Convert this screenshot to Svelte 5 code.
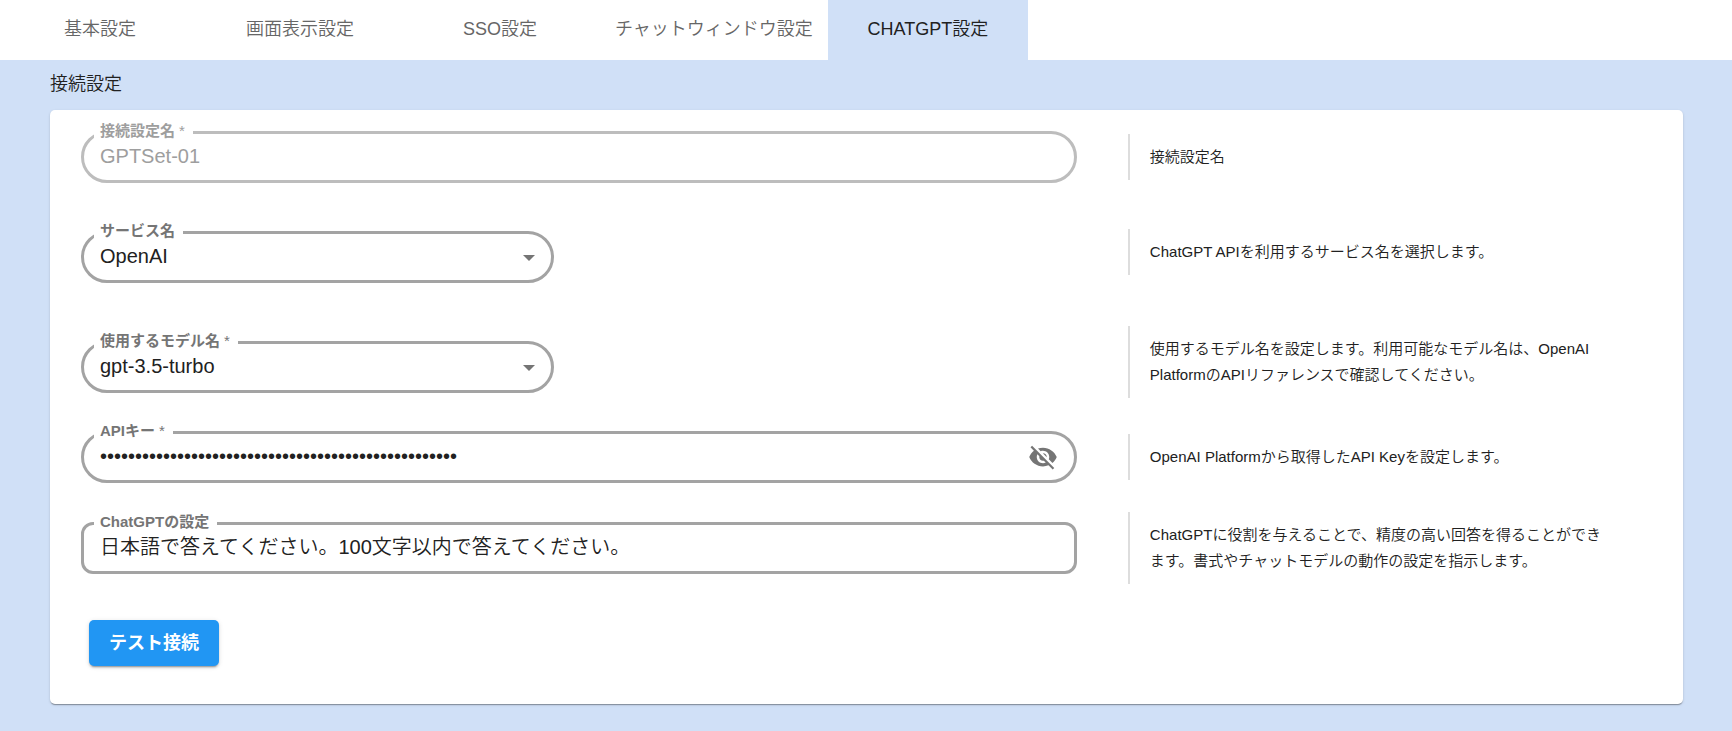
<script>
  let tabs = [
    { id: 'basic', label: '基本設定' },
    { id: 'display', label: '画面表示設定' },
    { id: 'sso', label: 'SSO設定' },
    { id: 'window', label: 'チャットウィンドウ設定' },
    { id: 'chatgpt', label: 'CHATGPT設定' }
  ];
  let activeTab = 'chatgpt';

  let settings = {
    name: 'GPTSet-01',
    service: 'OpenAI',
    model: 'gpt-3.5-turbo',
    apiKey: 'x'.repeat(51),
    prompt: '日本語で答えてください。100文字以内で答えてください。'
  };

  let services = ['OpenAI', 'Azure OpenAI'];
  let models = ['gpt-3.5-turbo', 'gpt-4'];

  let showKey = false;
  let testing = false;

  async function testConnection() {
    testing = true;
    try {
      await fetch('/api/chatgpt/test', {
        method: 'POST',
        headers: { 'Content-Type': 'application/json' },
        body: JSON.stringify(settings)
      });
    } catch (err) {
      console.error(err);
    } finally {
      testing = false;
    }
  }
</script>

<div class="tabs" role="tablist">
  {#each tabs as tab}
    <button
      type="button"
      role="tab"
      class="tab"
      class:active={tab.id === activeTab}
      aria-selected={tab.id === activeTab}
      on:click={() => (activeTab = tab.id)}
    >
      {tab.label}
    </button>
  {/each}
</div>

<main>
  <h2>接続設定</h2>

  <form class="card" on:submit|preventDefault={testConnection}>
    <div class="row">
      <div class="field disabled">
        <label for="name">接続設定名<span class="required">*</span></label>
        <input id="name" type="text" bind:value={settings.name} disabled />
      </div>
      <p class="description">接続設定名</p>
    </div>

    <div class="row service">
      <div class="field short">
        <label for="service">サービス名</label>
        <select id="service" bind:value={settings.service}>
          {#each services as service}
            <option value={service}>{service}</option>
          {/each}
        </select>
        <svg class="arrow" viewBox="0 0 12 6" aria-hidden="true"><path d="M0 0l6 6 6-6z" /></svg>
      </div>
      <p class="description">ChatGPT APIを利用するサービス名を選択します。</p>
    </div>

    <div class="row model">
      <div class="field short">
        <label for="model">使用するモデル名<span class="required">*</span></label>
        <select id="model" bind:value={settings.model}>
          {#each models as model}
            <option value={model}>{model}</option>
          {/each}
        </select>
        <svg class="arrow" viewBox="0 0 12 6" aria-hidden="true"><path d="M0 0l6 6 6-6z" /></svg>
      </div>
      <p class="description">
        使用するモデル名を設定します。利用可能なモデル名は、OpenAI PlatformのAPIリファレンスで確認してください。
      </p>
    </div>

    <div class="row key">
      <div class="field">
        <label for="api-key">APIキー<span class="required">*</span></label>
        <input
          id="api-key"
          type={showKey ? 'text' : 'password'}
          value={settings.apiKey}
          on:input={(e) => (settings.apiKey = e.currentTarget.value)}
        />
        <button type="button" class="toggle" aria-label="APIキーの表示切替" on:click={() => (showKey = !showKey)}>
          <svg viewBox="0 0 24 24" aria-hidden="true">
            <path d="M12 7c2.76 0 5 2.24 5 5 0 .65-.13 1.26-.36 1.83l2.92 2.92c1.51-1.26 2.7-2.89 3.43-4.75-1.73-4.39-6-7.5-11-7.5-1.4 0-2.74.25-3.98.7l2.16 2.16C10.74 7.13 11.35 7 12 7zM2 4.27l2.28 2.28.46.46C3.08 8.3 1.78 10.02 1 12c1.73 4.39 6 7.5 11 7.5 1.55 0 3.03-.3 4.38-.84l.42.42L19.73 22 21 20.73 3.27 3 2 4.27zM7.53 9.8l1.55 1.55c-.05.21-.08.43-.08.65 0 1.66 1.34 3 3 3 .22 0 .44-.03.65-.08l1.55 1.55c-.67.33-1.41.53-2.2.53-2.76 0-5-2.24-5-5 0-.79.2-1.53.53-2.2zm4.31-.78l3.15 3.15.02-.16c0-1.66-1.34-3-3-3l-.17.01z" />
          </svg>
        </button>
      </div>
      <p class="description">OpenAI Platformから取得したAPI Keyを設定します。</p>
    </div>

    <div class="row">
      <div class="field multiline">
        <label for="prompt">ChatGPTの設定</label>
        <textarea id="prompt" rows="1" bind:value={settings.prompt}></textarea>
      </div>
      <p class="description">
        ChatGPTに役割を与えることで、精度の高い回答を得ることができます。書式やチャットモデルの動作の設定を指示します。
      </p>
    </div>

    <button type="submit" class="submit" disabled={testing}>テスト接続</button>
  </form>
</main>

<style>
  :global(body) {
    background: #d0e0f7;
    color: #212121;
    font-family: 'Liberation Sans', 'Noto Sans CJK JP', sans-serif;
  }

  button, input, select, textarea {
    font-family: inherit;
  }

  .tabs {
    display: flex;
    background: #fff;
  }

  .tab {
    min-width: 200px;
    height: 60px;
    padding: 0 15px 6px;
    border: none;
    background: none;
    color: #666;
    font-size: 18px;
    font-weight: 350;
    cursor: pointer;
  }

  .tab.active {
    background: #d0e0f7;
    color: #212121;
  }

  main {
    padding: 11px 49px 27px 50px;
  }

  h2 {
    margin: 0 0 13px;
    font-size: 18px;
    font-weight: 350;
    line-height: 26px;
  }

  .card {
    display: flex;
    flex-direction: column;
    gap: 29px;
    padding: 21px 31px 38px;
    background: #fff;
    border-radius: 5px;
    box-shadow: 0 2px 1px -1px rgba(0, 0, 0, 0.2), 0 1px 1px rgba(0, 0, 0, 0.14), 0 1px 3px rgba(0, 0, 0, 0.12);
  }

  .row {
    display: grid;
    grid-template-columns: 19fr 10fr;
    column-gap: 51px;
    align-items: center;
  }

  .row.service {
    margin-top: 9px;
  }

  .row.model {
    margin-top: 14px;
  }

  .row.key {
    margin-top: 4px;
  }

  .row.service .field,
  .row.model .field {
    margin-top: 10px;
  }

  .field {
    position: relative;
    display: flex;
    color: #757575;
  }

  .field.short {
    width: calc(50% - 25px);
    min-width: 240px;
  }

  label {
    position: absolute;
    top: -10px;
    left: 13px;
    padding: 0 8px 0 6px;
    background: #fff;
    font-size: 15px;
    font-weight: 700;
    line-height: 20px;
  }

  .required {
    margin-left: 4px;
    font-weight: 400;
  }

  input, select, textarea {
    box-sizing: border-box;
    width: 100%;
    height: 52px;
    margin: 0;
    padding: 0 16px 2px;
    border: 3px solid #a3a3a3;
    border-radius: 26px;
    outline: none;
    appearance: none;
    background: #fff;
    color: #212121;
    font-size: 20px;
    font-weight: 350;
  }

  input:focus, select:focus, textarea:focus {
    border-color: #2196f3;
  }

  textarea {
    padding: 7px 16px;
    border-radius: 12px;
    line-height: 30px;
    resize: none;
  }

  .disabled label {
    color: #9e9e9e;
  }

  .disabled input {
    border-color: #bdbdbd;
    color: #9e9e9e;
  }

  .arrow {
    position: absolute;
    top: 24px;
    right: 19px;
    width: 12px;
    height: 6px;
    fill: currentColor;
    pointer-events: none;
  }

  .toggle {
    position: absolute;
    top: 11px;
    right: 19px;
    display: flex;
    padding: 0;
    border: none;
    background: none;
    color: #757575;
    cursor: pointer;
  }

  .toggle svg {
    width: 30px;
    height: 30px;
    fill: currentColor;
  }

  .description {
    margin: 0 24px 0 0;
    padding: 10px 20px;
    border-left: 2px solid #ddd;
    font-size: 15px;
    font-weight: 350;
    line-height: 26px;
  }

  .submit {
    align-self: flex-start;
    height: 46px;
    margin: 7px 8px 0;
    padding: 0 20px 4px;
    border: none;
    border-radius: 5px;
    background: #2196f3;
    box-shadow: 0 3px 1px -2px rgba(0, 0, 0, 0.2), 0 2px 2px rgba(0, 0, 0, 0.14), 0 1px 5px rgba(0, 0, 0, 0.12);
    color: #fff;
    font-size: 18px;
    font-weight: 700;
    cursor: pointer;
  }
</style>
